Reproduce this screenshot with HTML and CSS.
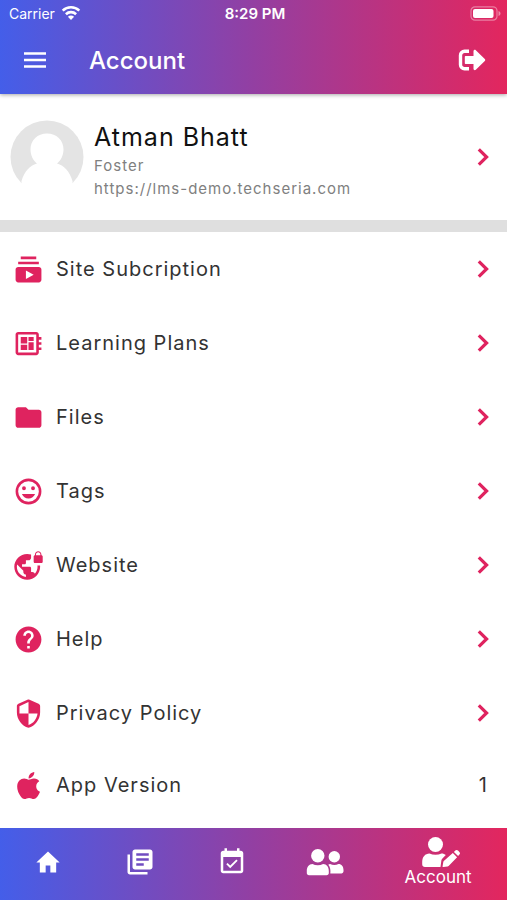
FILE: index.html
```html
<!DOCTYPE html>
<html lang="en">
<head>
<meta charset="utf-8">
<meta name="viewport" content="width=device-width, initial-scale=1">
<title>Account</title>
<link rel="stylesheet" href="styles.css">
</head>
<body>
<svg class="defs" aria-hidden="true">
  <symbol id="chevron" viewBox="0 0 12 18"><path d="M1.8 1.3 9.6 9 1.8 16.700" fill="none" stroke="currentColor" stroke-width="3.200"/></symbol>
</svg>
<header class="header">
  <div class="status">
    <div class="carrier">
      <span>Carrier</span>
      <svg width="20" height="16" viewBox="0 0 20 16" aria-hidden="true"><g fill="none" stroke="#fff" stroke-width="2.6"><path d="M1.7 5.6a12 12 0 0 1 16.6 0"/><path d="M4.9 9.2a7.4 7.4 0 0 1 10.2 0"/></g><path d="M10 15l-3.1-3.2a4.6 4.6 0 0 1 6.2 0z" fill="#fff"/></svg>
    </div>
    <time class="clock">8:29 PM</time>
    <svg class="battery" width="31" height="15" viewBox="0 0 31 15" aria-hidden="true"><rect x="1" y=".8" width="26" height="13.4" rx="4" fill="none" stroke="#fff" stroke-opacity=".4" stroke-width="1.2"/><rect x="3" y="3" width="20.500" height="9" rx="2" fill="#fff"/><path d="M28.500 5v5c1.300-.4 2-1.400 2-2.500s-.7-2.100-2-2.500z" fill="#fff" fill-opacity=".45"/></svg>
  </div>
  <div class="toolbar">
    <button class="icon-button" type="button" aria-label="Menu"><svg width="24" height="18" viewBox="0 0 24 18"><path d="M1 2.500h22M1 9h22M1 15.500h22" stroke="#fff" stroke-width="2.500"/></svg></button>
    <h1 class="title">Account</h1>
    <button class="icon-button" type="button" aria-label="Log out"><svg width="28" height="22" viewBox="0 0 28 22"><path d="M11 2.300H6.500a4 4 0 0 0-4 4v9.400a4 4 0 0 0 4 4H11" fill="none" stroke="#fff" stroke-width="3.400"/><path d="M7.800 7h7.700V2.200c0-1.300 1.400-1.900 2.300-1l9 8.800c.6.600.6 1.400 0 2l-9 8.800c-.9.900-2.300.3-2.300-1V15H7.800c-.6 0-1-.4-1-1V8c0-.6.4-1 1-1z" fill="#fff"/></svg></button>
  </div>
</header>
<main>
  <a class="profile" href="#profile">
    <svg class="avatar" width="74" height="74" viewBox="0 0 74 74" aria-hidden="true"><circle cx="37" cy="37" r="36.500" fill="#e4e4e4"/><path d="M37 13.500c9.500 0 16.500 6.700 16.500 15.800 0 6-2.500 11.200-6.500 14.200 7.500 2 12.500 8 15.500 17.500V74h-51V61c3-9.500 8-15.500 15.500-17.500-4-3-6.500-8.200-6.500-14.200 0-9.100 7-15.800 16.500-15.800z" fill="#fff"/></svg>
    <span class="person"><strong class="name">Atman Bhatt</strong><span class="meta">Foster</span><span class="meta">https://lms-demo.techseria.com</span></span>
    <svg class="chevron"><use href="#chevron"/></svg>
  </a>
  <nav class="list" aria-label="Account options">
    <a class="row" href="#subscription"><svg class="icon" viewBox="0 0 24 24"><path d="M20 8H4V6h16v2zm-2-6H6v2h12V2zm4 10v8c0 1.100-.9 2-2 2H4c-1.100 0-2-.9-2-2v-8c0-1.100.9-2 2-2h16c1.100 0 2 .9 2 2zm-6 4l-6-3.270v6.530L16 16z"/></svg><span class="label">Site Subcription</span><svg class="chevron"><use href="#chevron"/></svg></a>
    <a class="row" href="#plans"><svg class="icon" viewBox="0 0 24 24"><path d="M22 9V7h-2V5c0-1.100-.9-2-2-2H4c-1.100 0-2 .9-2 2v14c0 1.100.9 2 2 2h14c1.100 0 2-.9 2-2v-2h2v-2h-2v-2h2v-2h-2V9h2zm-4 10H4V5h14v14zM6 13h5v4H6zM12 7h4v3h-4zM6 7h5v5H6zM12 11h4v6h-4z"/></svg><span class="label">Learning Plans</span><svg class="chevron"><use href="#chevron"/></svg></a>
    <a class="row" href="#files"><svg class="icon" viewBox="0 0 24 24"><path d="M10 4H4c-1.100 0-2 .9-2 2v12c0 1.100.9 2 2 2h16c1.100 0 2-.9 2-2V8c0-1.100-.9-2-2-2h-8l-2-2z"/></svg><span class="label">Files</span><svg class="chevron"><use href="#chevron"/></svg></a>
    <a class="row" href="#tags"><svg class="icon" viewBox="0 0 24 24"><path d="M12 2a10 10 0 1 0 0 20 10 10 0 0 0 0-20zm0 18a8 8 0 1 1 0-16 8 8 0 0 1 0 16zM15.500 11a1.500 1.500 0 1 0 0-3 1.500 1.500 0 0 0 0 3zM8.500 11a1.500 1.500 0 1 0 0-3 1.500 1.500 0 0 0 0 3zM12 17.500c2.330 0 4.310-1.460 5.110-3.500H6.890c.8 2.040 2.780 3.500 5.110 3.500z"/></svg><span class="label">Tags</span><svg class="chevron"><use href="#chevron"/></svg></a>
    <a class="row" href="#website"><svg class="icon" viewBox="0 0 24 24"><path d="M22 4v-.5C22 2.120 20.880 1 19.500 1S17 2.120 17 3.500V4c-.55 0-1 .45-1 1v4c0 .55.45 1 1 1h5c.55 0 1-.45 1-1V5c0-.55-.45-1-1-1zm-.8 0h-3.400v-.5c0-.94.76-1.700 1.700-1.700s1.700.76 1.700 1.700V4zm-2.280 8c.04.33.08.66.08 1 0 2.080-.8 3.970-2.100 5.390-.26-.81-1-1.390-1.900-1.390h-1v-3c0-.55-.45-1-1-1H7v-2h2c.55 0 1-.45 1-1V8h2c1.100 0 2-.9 2-2V3.460c-.95-.3-1.950-.46-3-.46C5.480 3 1 7.480 1 13s4.480 10 10 10 10-4.480 10-10c0-.34-.02-.67-.05-1h-2.030zM10 20.930c-3.950-.49-7-3.850-7-7.930 0-.62.08-1.210.21-1.790L8 16v1c0 1.100.9 2 2 2v1.930z"/></svg><span class="label">Website</span><svg class="chevron"><use href="#chevron"/></svg></a>
    <a class="row" href="#help"><svg class="icon" viewBox="0 0 24 24"><path d="M12 2C6.480 2 2 6.480 2 12s4.480 10 10 10 10-4.480 10-10S17.520 2 12 2zm1 17h-2v-2h2v2zm2.070-7.750l-.9.920C13.450 12.900 13 13.500 13 15h-2v-.5c0-1.100.45-2.100 1.170-2.830l1.240-1.260c.37-.36.59-.86.59-1.410 0-1.100-.9-2-2-2s-2 .9-2 2H8c0-2.210 1.790-4 4-4s4 1.790 4 4c0 .88-.36 1.680-.93 2.250z"/></svg><span class="label">Help</span><svg class="chevron"><use href="#chevron"/></svg></a>
    <a class="row" href="#privacy"><svg class="icon" viewBox="0 0 24 24"><path d="M11.200 1.400 4.200 4.500C3.500 4.800 3 5.500 3 6.300V11c0 5.550 3.840 10.740 9 12 5.160-1.260 9-6.450 9-12V6.300c0-.8-.5-1.500-1.200-1.800l-7-3.100c-.5-.2-1.100-.2-1.600 0zM12 12h7c-.53 4.120-3.280 7.790-7 8.940V12H5V6.300l7-3.110z"/></svg><span class="label">Privacy Policy</span><svg class="chevron"><use href="#chevron"/></svg></a>
    <div class="row version"><svg class="icon" viewBox="-65 0 512 512"><path d="M318.700 268.700c-.2-36.700 16.400-64.400 50-84.800-18.800-26.900-47.200-41.700-84.700-44.600-35.500-2.800-74.300 20.700-88.500 20.700-15 0-49.400-19.700-76.400-19.700C63.300 141.200 4 184.800 4 273.500q0 39.300 14.400 81.200c12.800 36.700 59 126.700 107.200 125.200 25.200-.6 43-17.900 75.800-17.900 31.800 0 48.300 17.900 76.400 17.900 48.600-.7 90.400-82.500 102.600-119.300-65.200-30.700-61.700-90-61.700-91.900zm-56.600-164.200c27.300-32.400 24.800-61.900 24-72.500-24.100 1.400-52 16.400-67.900 34.900-17.500 19.800-27.800 44.300-25.600 71.900 26.100 2 49.900-11.400 69.500-34.300z"/></svg><span class="label">App Version</span><span class="value">1</span></div>
  </nav>
</main>
<nav class="tabs" aria-label="Main">
  <a class="tab" href="#home" aria-label="Home"><svg width="28" height="28" viewBox="0 0 24 24"><path d="M10 21v-6h4v6h5v-8.500h3L12 3 2 12.500h3V21z"/></svg></a>
  <a class="tab" href="#courses" aria-label="Courses"><svg width="30" height="30" viewBox="0 0 24 24"><path d="M4 6H2v14c0 1.100.9 2 2 2h14v-2H4V6zm16-4H8c-1.100 0-2 .9-2 2v12c0 1.100.9 2 2 2h12c1.100 0 2-.9 2-2V4c0-1.100-.9-2-2-2zm-1 9H9V9h10v2zm-4 4H9v-2h6v2zm4-8H9V5h10v2z"/></svg></a>
  <a class="tab" href="#calendar" aria-label="Calendar"><svg width="30" height="30" viewBox="0 0 24 24"><path d="M16.530 11.060 15.470 10l-4.880 4.880-2.120-2.120-1.060 1.060L10.590 17l5.940-5.940zM19 3h-1V1h-2v2H8V1H6v2H5c-1.110 0-2 .9-2 2v14c0 1.100.89 2 2 2h14c1.100 0 2-.9 2-2V5c0-1.100-.9-2-2-2zm0 16H5V8h14v11z"/></svg></a>
  <a class="tab" href="#people" aria-label="People"><svg width="42" height="28" viewBox="-4 0 42 28"><circle cx="11.800" cy="7.800" r="6.700"/><path d="M6.500 16c1.600.8 3.300 1.200 5.300 1.200s3.700-.4 5.300-1.200c3.600 0 5.700 3 5.700 7v2c0 1.300-.9 2.200-2.200 2.200H3c-1.300 0-2.200-.9-2.200-2.200v-2c0-4 2.100-7 5.700-7z"/><circle cx="28.300" cy="8.700" r="5.700"/><path d="M22.300 16.800c.5-.5 1.100-.8 1.800-.8 1.300.6 2.700.9 4.200.9s2.900-.3 4.200-.9c3.100 0 5 2.500 5 6v1.300c0 1.200-.9 2.100-2.100 2.100H24.300c.5-3.300-.1-6.400-2-8.600z"/></svg></a>
  <a class="tab active" href="#account" aria-current="page"><svg width="44" height="30" viewBox="-6 0 44 30"><circle cx="13.500" cy="7.500" r="7.500"/><path d="M7.500 16.500c1.900.8 3.900 1.200 6 1.200s4.100-.4 6-1.200c1.800 0 3.200.6 4.300 1.600l-3.600 3.700c-.4.4-.7.900-.8 1.500L18.500 30H3c-1.700 0-2.800-1.100-2.800-2.800V25c0-5 2.900-8.500 7.300-8.500z"/><path d="m30.800 16 4.300 4.300-8.500 8.700c-.3.300-.6.400-1 .5l-4.300.5c-.5.100-.8-.3-.7-.8l.7-4.200c.1-.4.200-.7.500-1zM31.900 14.900l1.400-1.400c.8-.8 1.900-.8 2.700 0l1.400 1.400c.8.800.8 1.900 0 2.700l-1.300 1.500z"/></svg><span>Account</span></a>
</nav>
</body>
</html>
```
FILE: styles.css
```css
* { box-sizing: border-box; }

:root {
  --pink: #df235f;
  --brand: linear-gradient(90deg, #445ee9 0%, #933fa2 50%, #e3265e 100%);
}

body {
  margin: 0;
  min-height: 100vh;
  display: flex;
  flex-direction: column;
  background: #fff;
  color: #333;
  font-family: Inter, "Liberation Sans", sans-serif;
}

a { color: inherit; text-decoration: none; }
svg { flex: none; display: block; }
.defs { display: none; }
main { flex: 1; }

.header {
  background: var(--brand);
  color: #fff;
  box-shadow: 0 1px 4px rgba(0, 0, 0, 0.35);
}

.status {
  display: grid;
  grid-template-columns: 1fr auto 1fr;
  align-items: center;
  height: 26px;
  padding: 0 6px 0 9px;
  font-size: 14px;
}
.carrier { display: flex; align-items: center; gap: 6px; }
.clock { font-size: 15px; font-weight: 600; }
.battery { justify-self: end; }

.toolbar {
  display: flex;
  align-items: center;
  height: 68px;
  padding: 0 21px 0 23px;
}
.icon-button { padding: 0; border: 0; background: none; }
.title { flex: 1; margin: 0 0 0 42px; font-size: 24px; font-weight: 500; }

.profile {
  display: flex;
  align-items: center;
  height: 126px;
  padding: 0 18px 0 10px;
}
.person { flex: 1; display: flex; flex-direction: column; padding: 6px 0 0 10px; letter-spacing: 1px; }
.name { font-size: 25px; line-height: 34px; font-weight: 400; color: #111; }
.meta { font-size: 15px; line-height: 23px; color: #808080; }
.chevron { width: 12px; height: 18px; color: var(--pink); }

.list { border-top: 12px solid #dfdfdf; }
.row {
  display: flex;
  align-items: center;
  height: 74px;
  padding: 0 18px 0 13px;
  font-size: 20px;
}
.version { height: 70px; padding-right: 20px; }
.icon { width: 31px; height: 31px; fill: var(--pink); fill-rule: evenodd; }
.label { flex: 1; margin-left: 12px; letter-spacing: 1px; }

.tabs {
  display: flex;
  height: 72px;
  padding-left: 2px;
  background: var(--brand);
  color: #fff;
}
.tab { flex: 2; display: flex; align-items: center; justify-content: center; padding-bottom: 4px; }
.tab svg { fill: #fff; }
.active { flex: 3; flex-direction: column; font-size: 17px; line-height: 20px; }
```
